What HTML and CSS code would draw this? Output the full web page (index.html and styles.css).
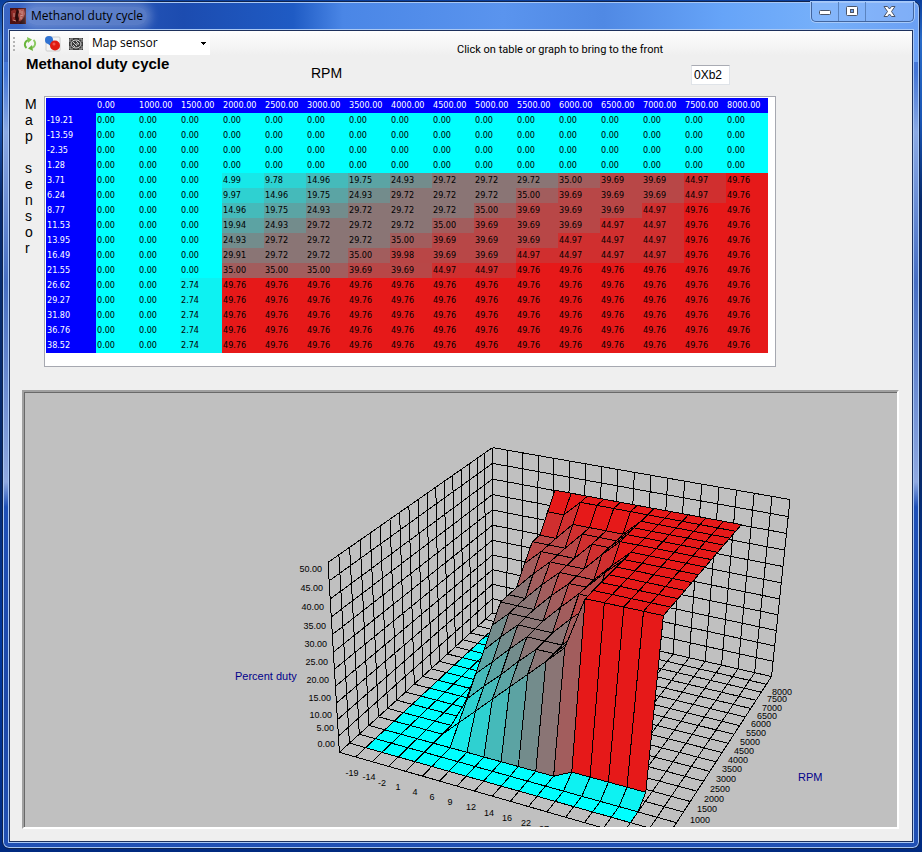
FILE: index.html
```html
<!DOCTYPE html>
<html lang="en">
<head>
<meta charset="utf-8">
<title>Methanol duty cycle</title>
<link rel="stylesheet" href="styles.css">
</head>
<body>
<div class="window">
  <header class="titlebar">
    <svg class="app-icon" width="16" height="16" viewBox="0 0 16 16" aria-hidden="true">
      <rect width="16" height="16" fill="#4e1111"/>
      <path d="M1 3l4-2 2 4-1 6-4 2z" fill="#8e2b27"/>
      <path d="M8 1h6l1 5-3 6-3 1-1-4z" fill="#a84840"/>
      <path d="M6 4l2-3 1 3-1 3 1 4-2 3-2-4z" fill="#280707"/>
      <path d="M10 2v3M12 3v3M10 8l3-1M4 5v4M3 12l3 1M10 10l2 0" stroke="#c98a80" stroke-width="1" fill="none"/>
      <path d="M12 12l3-3v7H9z" fill="#2b0909"/>
    </svg>
    <h1 class="title">Methanol duty cycle</h1>
    <div class="caption">
      <button class="cap min" type="button" aria-label="Minimize"><svg width="14" height="8" viewBox="0 0 14 8"><rect x="1.500" y="2.500" width="11" height="4" rx="1" fill="#fff" stroke="#4a5468"/></svg></button>
      <button class="cap max" type="button" aria-label="Maximize"><svg width="13" height="11" viewBox="0 0 13 11"><rect x="0.500" y="0.500" width="11" height="9" rx="1" fill="#fff" stroke="#4a5468"/><rect x="4.500" y="3.500" width="3" height="3" fill="#6fa0e8" stroke="#4a5468"/></svg></button>
      <button class="cap close" type="button" aria-label="Close"><svg width="13" height="11" viewBox="0 0 13 11"><path d="M1 .5h3.500L6.500 3 8.500 .5H12L8.500 5.500 12 10.500H8.500L6.500 8 4.500 10.500H1L4.500 5.500z" fill="#fff" stroke="#4a5468"/></svg></button>
    </div>
  </header>
  <main class="client">
    <div class="toolbar">
      <span class="grip" aria-hidden="true"></span>
      <button class="tool" type="button" aria-label="Refresh"><svg width="16" height="16" viewBox="0 0 16 16"><path d="M4.500 12A4.500 4.500 0 0 1 4 5.500L6 4" fill="none" stroke="#69b53c" stroke-width="2"/><path d="M5 1l5 2.500L6 7z" fill="#7cc24c"/><path d="M11.500 4A4.500 4.500 0 0 1 12 10.500L10 12" fill="none" stroke="#8ccb62" stroke-width="2"/><path d="M11 15l-5-2.500L10 9z" fill="#69b53c"/></svg></button>
      <button class="tool" type="button" aria-label="Colours"><svg width="16" height="16" viewBox="0 0 16 16"><rect x="1" y="1" width="14" height="14" rx="1" fill="#f4f4f4" stroke="#ccc"/><path d="M1 4l3 5 3 1 3-5z" fill="#3a6fc4"/><circle cx="4" cy="4" r="4" fill="#2f72d2"/><circle cx="10" cy="9.500" r="5" fill="#df1b12"/><circle cx="9" cy="8" r="1.500" fill="#f2574e"/></svg></button>
      <button class="tool" type="button" aria-label="Wireframe"><svg width="16" height="16" viewBox="0 0 16 16"><rect x="1" y="2" width="14" height="12" fill="#3a3a3a"/><path d="M2 3h3M2 3v3M14 3h-3M14 3v3M2 13h3M2 13v-3M14 13h-3M14 13v-3" stroke="#aaa"/><ellipse cx="8" cy="8" rx="5" ry="4" fill="none" stroke="#ddd"/><path d="M5 6l4 4M8 5l3 3M5 9l2 2M8 8h3" stroke="#ccc"/></svg></button>
      <select class="mode" aria-label="Map view"><option>Map sensor</option></select>
      <label class="hint" for="code">Click on table or graph to bring to the front</label>
    </div>
    <div class="heading">
      <h2 class="name">Methanol duty cycle</h2>
      <span class="axis-top">RPM</span>
      <input class="code" id="code" type="text" value="0Xb2">
    </div>
    <div class="map">
      <div class="axis-side"><span>M</span><span>a</span><span>p</span><span>&nbsp;</span><span>s</span><span>e</span><span>n</span><span>s</span><span>o</span><span>r</span></div>
      <div class="grid-box"><table class="grid" id="grid"></table></div>
    </div>
    <section class="chart">
      <svg id="plot" class="plot" viewBox="24 392 873 435" preserveAspectRatio="xMinYMin slice" role="img" aria-label="Percent duty surface"></svg>
    </section>
  </main>
</div>
<script src="app.js"></script>
</body>
</html>
```
FILE: styles.css
```css
* { box-sizing: border-box; }
html, body { height: 100%; }
body {
  margin: 0;
  padding: 1px 2px 3px;
  font-family: "Liberation Sans", Arial, sans-serif;
  color: #000;
  background: linear-gradient(180deg, #0a3f9c 0, #2a6cc8 40px, #1a56b4 120px, #062a6c 200px, #062a6c 480px, #0038a0 640px, #002a80 100%);
  overflow: hidden;
}
h1, h2 { margin: 0; font-weight: normal; }
.window {
  height: 100%;
  display: flex;
  flex-direction: column;
  padding: 0 5px 5px;
  border: 1px solid #10234c;
  border-radius: 7px;
  box-shadow: inset 0 0 0 1px #a9c8f4;
  background:
    linear-gradient(180deg, transparent 70px, rgba(190, 208, 240, .6) 130px, rgba(90, 120, 190, .5) 280px, rgba(190, 205, 240, .7) 480px, transparent 505px),
    linear-gradient(90deg, #3a66c4 0, #1c4cb0 180px, #1f5bc4 290px, #4a86e6 340px, #5a94ee 500px, #5089e4 600px, #66a4f8 720px, #76b0fa 820px, #6ba0f4 100%) 0 0 / 100% 60px no-repeat,
    linear-gradient(180deg, #4a7cdc 0, #1e50b8 500px, #1b47a8 700px, #2050b4 100%);
}
.titlebar {
  flex: 0 0 27px;
  display: flex;
  align-items: flex-start;
}
.app-icon { margin: 6px 0 0 2px; }
.title {
  margin: 5px 0 0 1px;
  padding: 0 4px;
  border-radius: 9px;
  font: 12px/18px "Open Sans", "Noto Sans", sans-serif;
  background: rgba(255, 255, 255, .24);
  box-shadow: 0 0 8px 5px rgba(255, 255, 255, .24);
}
.caption {
  margin-left: auto;
  display: flex;
  height: 20px;
  border: 1px solid #41659f;
  border-top: 0;
  border-radius: 0 0 5px 5px;
  box-shadow: 0 0 0 1px #a5c9fa;
  background: rgba(150, 190, 250, .45);
}
.cap {
  display: flex;
  align-items: center;
  justify-content: center;
  width: 27px;
  padding: 0;
  border: 0;
  border-right: 1px solid #5a83bf;
  background: none;
}
.cap.close { width: 47px; border-right: 0; }
.client {
  flex: 1;
  min-height: 0;
  display: flex;
  flex-direction: column;
  border: 1px solid #1c305c;
  outline: 1px solid #a9c8f4;
  margin: 1px 1px 1px;
  background: #efefef;
}
.toolbar {
  display: flex;
  align-items: center;
  height: 25px;
  padding-left: 3px;
  background: linear-gradient(180deg, #fdfdfd, #efefef);
}
.grip {
  width: 2px;
  height: 14px;
  margin-right: 7px;
  background: repeating-linear-gradient(180deg, #b5b5b5 0 2px, transparent 2px 4px);
}
.tool {
  width: 16px;
  height: 16px;
  margin-right: 7px;
  padding: 0;
  border: 0;
  background: none;
}
.tool svg { display: block; }
.mode {
  appearance: none;
  width: 121px;
  height: 22px;
  margin-left: -2px;
  padding: 0 0 2px 3px;
  border: 0;
  font: 12px/18px "Open Sans", "Noto Sans", sans-serif;
  color: #000;
  background:
    linear-gradient(#000, #000) right 4px top 9px / 5px 1px no-repeat,
    linear-gradient(#000, #000) right 5px top 10px / 3px 1px no-repeat,
    linear-gradient(#000, #000) right 6px top 11px / 1px 1px no-repeat,
    #fff;
}
.hint {
  margin: 12px 0 0 247px;
  font-family: Roboto, "Liberation Sans", sans-serif;
  font-size: 11px;
  line-height: 14px;
  white-space: nowrap;
}
.heading {
  display: flex;
  align-items: flex-start;
  height: 40px;
  padding-left: 16px;
}
.name { width: 285px; font-size: 15px; line-height: 15px; font-weight: bold; }
.axis-top { width: 380px; padding-top: 8px; font-size: 14px; line-height: 18px; }
.code {
  width: 39px;
  height: 20px;
  margin-top: 9px;
  padding: 0 2px;
  border: 1px solid #dfe3e8;
  border-top-color: #a9abb3;
  font: 12px "Liberation Sans", Arial, sans-serif;
  background: #fff;
}
.map { display: flex; padding-left: 15px; }
.axis-side {
  display: flex;
  flex-direction: column;
  width: 19px;
  font-size: 14px;
  line-height: 16px;
}
.grid-box {
  flex: 0 1 732px;
  height: 271px;
  padding: 1px;
  border: 1px solid #a6a8b0;
  background: #fff;
}
.grid {
  border-collapse: collapse;
  table-layout: fixed;
  width: 722px;
  font: 9px/15px "DejaVu Sans Condensed", "DejaVu Sans", sans-serif;
}
.grid th, .grid td { height: 15px; padding: 0 0 0 1px; text-align: left; font-weight: normal; }
.grid th { width: 42px; color: #fff; background: #00f; }
.grid th:first-child { width: 50px; }
.chart {
  flex: 1;
  min-height: 0;
  margin: 23px 13px 12px 12px;
  border: 2px solid;
  border-color: #a0a0a0 #fff #fff #a0a0a0;
  box-shadow: inset 1px 1px 0 #696969;
  background: #c0c0c0;
}
.plot { display: block; width: 100%; height: 100%; }
.mesh { fill: none; stroke: #000; stroke-width: 1; shape-rendering: crispEdges; }
.face { stroke: #000; stroke-width: 1; stroke-linejoin: round; shape-rendering: crispEdges; }
.tick { font: 9px "Liberation Sans", Arial, sans-serif; fill: #000; }
.axis { font: 11px "Liberation Sans", Arial, sans-serif; fill: #00008b; }
```
FILE: app.js
```js
const rpm = [0, 1000, 1500, 2000, 2500, 3000, 3500, 4000, 4500, 5000, 5500, 6000, 6500, 7000, 7500, 8000];
const load = ['-19.21', '-13.59', '-2.35', '1.28', '3.71', '6.24', '8.77', '11.53', '13.95', '16.49', '21.55', '26.62', '29.27', '31.80', '36.76', '38.52'];

// One row per map sensor value, from 2000 RPM upwards.
const a = 29.72, b = 35, c = 39.69, d = 44.97, e = 49.76;
const rising = [
  [4.99, 9.78, 14.96, 19.75, 24.93, a, a, a, b, c, c, d, e],
  [9.97, 14.96, 19.75, 24.93, a, a, a, b, c, c, c, d, e],
  [14.96, 19.75, 24.93, a, a, a, b, c, c, c, d, e, e],
  [19.94, 24.93, a, a, a, b, c, c, c, d, d, e, e],
  [24.93, a, a, a, b, c, c, c, d, d, d, e, e],
  [29.91, a, a, b, 39.98, c, c, d, d, d, d, e, e],
  [b, b, b, c, c, d, d, e, e, e, e, e, e]
];
const duty = load.map((_, i) => {
  if (i < 4) return Array(16).fill(0);
  if (i < 11) return [0, 0, 0, ...rising[i - 4]];
  return [0, 0, 2.74, ...Array(13).fill(e)];
});

function colour(v) {
  const r = Math.round(v * 4.63);
  return `rgb(${r},${255 - r},${255 - r})`;
}

document.getElementById('grid').innerHTML =
  '<tr><th></th>' + rpm.map(r => `<th>${r.toFixed(2)}</th>`).join('') + '</tr>' +
  duty.map((row, i) => `<tr><th>${load[i]}</th>` +
    row.map(v => `<td style="background:${colour(v)}">${v.toFixed(2)}</td>`).join('') + '</tr>').join('');

// Camera: fitted to the corners of the 18 x 18 x 11 box.
const corners = [
  [0, 0, 0, 339, 752], [0, 18, 0, 492.5, 613], [18, 18, 0, 771.5, 676.5], [18, 0, 0, 662, 845.5],
  [0, 0, 11, 328, 562.5], [0, 18, 11, 492.5, 447.5], [18, 18, 11, 790, 499.5],
  [16, 1, 0, 630.5, 822], [1, 1, 0, 366, 748]
];
function fitCamera(points) {
  const rows = [];
  for (const [X, Y, Z, u, v] of points) {
    const x = X / 18, y = Y / 18, z = Z / 18, p = u / 1000, q = v / 1000;
    rows.push([x, y, z, 1, 0, 0, 0, 0, -p * x, -p * y, -p * z, p]);
    rows.push([0, 0, 0, 0, x, y, z, 1, -q * x, -q * y, -q * z, q]);
  }
  const n = 11;
  const m = Array.from({ length: n }, (_, i) =>
    Array.from({ length: n + 1 }, (_, j) => rows.reduce((s, r) => s + r[i] * r[j], 0)));
  for (let k = 0; k < n; k++) {
    let best = k;
    for (let i = k + 1; i < n; i++) if (Math.abs(m[i][k]) > Math.abs(m[best][k])) best = i;
    [m[k], m[best]] = [m[best], m[k]];
    for (let i = 0; i < n; i++) {
      if (i === k) continue;
      const f = m[i][k] / m[k][k];
      for (let j = k; j <= n; j++) m[i][j] -= f * m[k][j];
    }
  }
  return m.map((r, i) => r[n] / r[i]);
}
const cam = fitCamera(corners);
function at(X, Y, Z) {
  const x = X / 18, y = Y / 18, z = Z / 18;
  const w = cam[8] * x + cam[9] * y + cam[10] * z + 1;
  const u = 1000 * (cam[0] * x + cam[1] * y + cam[2] * z + cam[3]) / w;
  const v = 1000 * (cam[4] * x + cam[5] * y + cam[6] * z + cam[7]) / w;
  return u.toFixed(1) + ' ' + v.toFixed(1);
}

let path = '';
const line = (p, q) => { path += `M${at(...p)}L${at(...q)}`; };
for (let i = 0; i <= 18; i++) {
  line([i, 0, 0], [i, 18, 0]);
  line([0, i, 0], [18, i, 0]);
  line([0, i, 0], [0, i, 11]);
  line([i, 18, 0], [i, 18, 11]);
}
for (let k = 1; k <= 11; k++) {
  line([0, 0, k], [0, 18, k]);
  line([0, 18, k], [18, 18, k]);
}
let out = `<path class="mesh" d="${path}"/>`;

// Faces are painted from the far corner towards the viewer.
const height = (i, j) => duty[i][j] / 5.02;
for (let j = 14; j >= 0; j--) {
  for (let i = 0; i < 15; i++) {
    const pts = [[i, j], [i + 1, j], [i + 1, j + 1], [i, j + 1]]
      .map(([x, y]) => at(x + 1, y + 1, height(x, y))).join('L');
    out += `<path class="face" fill="${colour(duty[i][j + 1])}" d="M${pts}z"/>`;
  }
}

const text = (cls, anchor, x, y, s) => {
  out += `<text class="${cls}" text-anchor="${anchor}" x="${x}" y="${y}">${s}</text>`;
};
[[322, 572], [323, 591], [324, 610], [326, 629], [327, 647], [328, 665], [329, 683], [331, 701], [332, 718], [334, 731], [335, 747]]
  .forEach(([x, y], i) => text('tick', 'end', x, y, (50 - 5 * i).toFixed(2)));
[[352, 776], [369, 780], [382, 786], [398, 790], [415, 795], [432, 800], [450, 805], [471, 810], [489, 816], [507, 821], [526, 826], [544, 832]]
  .forEach(([x, y], i) => text('tick', 'middle', x, y, Math.round(load[i])));
[[685, 833], [700, 823], [707, 812], [714, 802], [720, 792], [726, 782], [732, 772], [738, 763], [744, 754], [750, 745], [756, 736], [761, 727], [767, 719], [772, 711], [777, 702], [782, 695]]
  .forEach(([x, y], i) => text('tick', 'middle', x, y, rpm[i]));
text('axis', 'start', 235, 680, 'Percent duty');
text('axis', 'start', 798, 781, 'RPM');
document.getElementById('plot').innerHTML = out;
```
